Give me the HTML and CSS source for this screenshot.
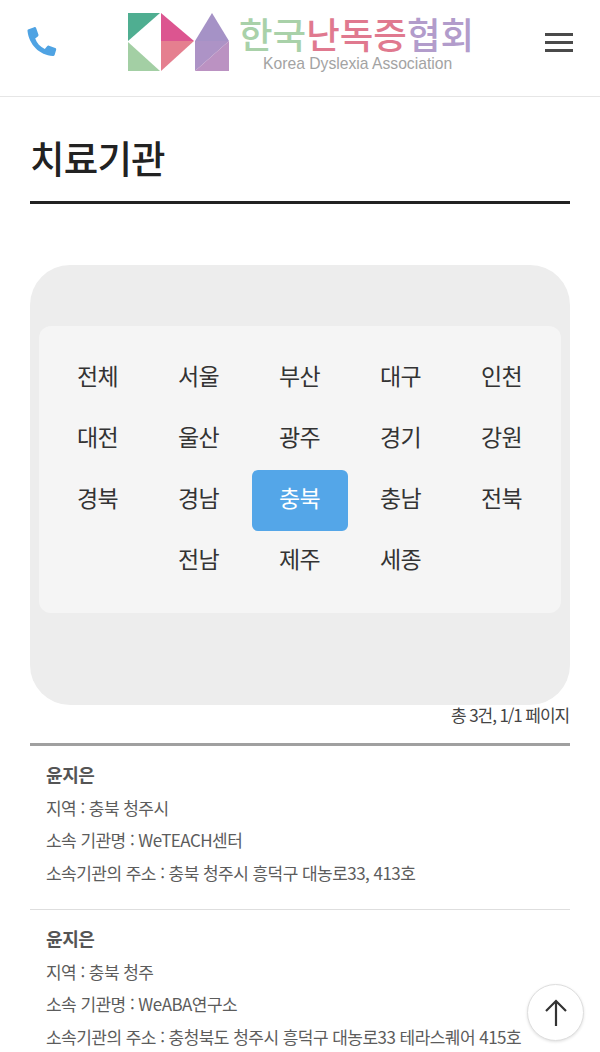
FILE: index.html
```html
<!DOCTYPE html>
<html lang="ko">
<head>
<meta charset="utf-8">
<title>치료기관</title>
<link rel="stylesheet" href="styles.css">
</head>
<body>
<header class="site-header">
  <a class="phone" href="#" aria-label="전화">
    <svg width="36" height="36" viewBox="0 0 36 36"><path fill="#4fa3e3" d="M3 4.5 L9.2 2.2 C10.2 1.9 10.9 2.3 11.2 3.2 L13.4 9.6 C13.7 10.4 13.4 11 12.8 11.5 L10.2 13.5 C11.8 18.2 15.2 21.8 19.8 24 L22.1 21.2 C22.6 20.6 23.3 20.4 24 20.7 L30.2 23 C31.1 23.3 31.4 24 31.1 24.9 L29.6 30 C29.3 30.8 28.7 31.2 27.9 31.1 C14.4 30.2 4 19.5 2.5 6 C2.4 5.3 2.6 4.8 3 4.5 Z"/></svg>
  </a>
  <a class="logo" href="#">
    <svg class="logo-mark" width="101" height="58" viewBox="0 0 101 58">
      <polygon fill="#4fae91" points="0,0 32,0 0,28"/>
      <polygon fill="#a3cfa4" points="0,29 32,58 0,58"/>
      <polygon fill="#dc5590" points="33,0 66,28 33,28"/>
      <polygon fill="#e57f8f" points="33,28 66,28 33,58"/>
      <polygon fill="#a592c6" points="67,28 84,0 101,28"/>
      <polygon fill="#ad93c6" points="67,28 101,28 67,58"/>
      <polygon fill="#bb92c2" points="101,28 101,58 67,58"/>
    </svg>
    <span class="logo-text">
      <span class="logo-ko"><span class="green">한국</span><span class="pink">난독증</span><span class="purple">협회</span></span>
      <span class="logo-en">Korea Dyslexia Association</span>
    </span>
  </a>
  <button class="menu" aria-label="메뉴"><span></span><span></span><span></span></button>
</header>

<main class="content">
  <h1 class="page-title">치료기관</h1>

  <section class="region-panel">
    <nav class="region-grid">
      <a class="region">전체</a><a class="region">서울</a><a class="region">부산</a><a class="region">대구</a><a class="region">인천</a>
      <a class="region">대전</a><a class="region">울산</a><a class="region">광주</a><a class="region">경기</a><a class="region">강원</a>
      <a class="region">경북</a><a class="region">경남</a><a class="region active">충북</a><a class="region">충남</a><a class="region">전북</a>
      <a class="region second">전남</a><a class="region">제주</a><a class="region">세종</a>
    </nav>
  </section>

  <p class="total">총 3건, 1/1 페이지</p>

  <ul class="list">
    <li class="item">
      <strong class="name">윤지은</strong>
      <p>지역 : 충북 청주시</p>
      <p>소속 기관명 : WeTEACH센터</p>
      <p>소속기관의 주소 : 충북 청주시 흥덕구 대농로33, 413호</p>
    </li>
    <li class="item">
      <strong class="name">윤지은</strong>
      <p>지역 : 충북 청주</p>
      <p>소속 기관명 : WeABA연구소</p>
      <p>소속기관의 주소 : 충청북도 청주시 흥덕구 대농로33 테라스퀘어 415호</p>
    </li>
  </ul>
</main>

<a class="to-top" href="#" aria-label="맨 위로">
  <svg width="24" height="28" viewBox="0 0 24 28"><path d="M12 27 V2 M2 12 L12 2 L22 12" fill="none" stroke="#333" stroke-width="2.2"/></svg>
</a>
</body>
</html>
```
FILE: styles.css
```css
* { box-sizing: border-box; }
html, body { margin: 0; padding: 0; background: #fff; }
body {
  font-family: "Noto Sans CJK KR", "Noto Sans", sans-serif;
  color: #333;
  height: 1052px;
  overflow: hidden;
}
a { color: inherit; text-decoration: none; }

.site-header {
  height: 97px;
  border-bottom: 1px solid #e6e6e6;
  display: flex;
  align-items: flex-start;
  justify-content: space-between;
  padding: 0 27px;
}
.phone { display: block; margin-top: 25px; margin-left: -2px; margin-right: -1px; }
.phone svg { display: block; }
.logo { display: flex; align-items: flex-start; margin: 13px 0 0 0; }
.logo-mark { display: block; }
.logo-text { display: flex; flex-direction: column; align-items: flex-start; margin-left: 10px; width: 238px; }
.logo-ko { font-size: 36.5px; line-height: 40px; font-weight: 500; letter-spacing: 0; white-space: nowrap; margin-top: 1px; }
.green { color: #a9d1a9; }
.pink { color: #e0798f; }
.purple { color: #b29ccb; }
.logo-en { font-family: "Liberation Sans", sans-serif; font-size: 15.7px; line-height: 18px; color: #a3a3a3; white-space: nowrap; margin: 1px 0 0 24px; }
.menu { margin: 33px 0 0 0; padding: 0; width: 28px; height: 19px; border: 0; background: none; display: flex; flex-direction: column; justify-content: space-between; }
.menu span { display: block; height: 3px; background: #4a4a4a; }

.content { padding: 0 30px; }
.page-title {
  margin: 0;
  height: 107px;
  padding-top: 32px;
  border-bottom: 3px solid #222;
  font-size: 37.5px;
  line-height: 56px;
  font-weight: 500;
  letter-spacing: -0.8px;
  color: #222;
}

.region-panel {
  margin-top: 61px;
  height: 440px;
  padding: 61px 9px 0;
  background: #ededed;
  border-radius: 40px;
}
.region-grid {
  height: 287px;
  padding: 22px 8px 0;
  background: #f5f5f5;
  border-radius: 12px;
  display: grid;
  grid-template-columns: repeat(5, 101px);
  grid-auto-rows: 61px;
  justify-content: center;
}
.region {
  display: flex;
  align-items: center;
  justify-content: center;
  margin: 0 2.5px;
  padding: 0 1px 8px 0;
  font-size: 23px;
  letter-spacing: -0.6px;
  color: #333;
  border-radius: 6px;
}
.region.second { grid-column-start: 2; }
.region.active { background: #54a6e8; color: #fff; }

.total {
  margin: 0;
  height: 38px;
  padding: 0 1px 0 0;
  text-align: right;
  font-size: 17px;
  line-height: 20px;
  letter-spacing: -1.1px;
  color: #444;
}

.list { list-style: none; margin: 0; padding: 0; border-top: 3px solid #a0a0a0; }
.item { height: 164px; padding: 15px 16px 0; border-bottom: 1px solid #dedede; }
.name { display: block; font-size: 18px; line-height: 26px; font-weight: 700; letter-spacing: -0.4px; color: #555; }
.item p { margin: 8px 0 0; font-size: 17px; line-height: 26px; letter-spacing: -0.54px; color: #5c5c5c; white-space: nowrap; }
.item p + p { margin-top: 6.4px; }

.to-top {
  position: fixed;
  left: 527px;
  top: 984px;
  width: 57px;
  height: 57px;
  border-radius: 50%;
  background: #fff;
  border: 1px solid #ddd;
  box-shadow: 0 1px 3px rgba(0,0,0,.12);
  display: flex;
  align-items: center;
  justify-content: center;
}
.to-top svg { display: block; }
```
